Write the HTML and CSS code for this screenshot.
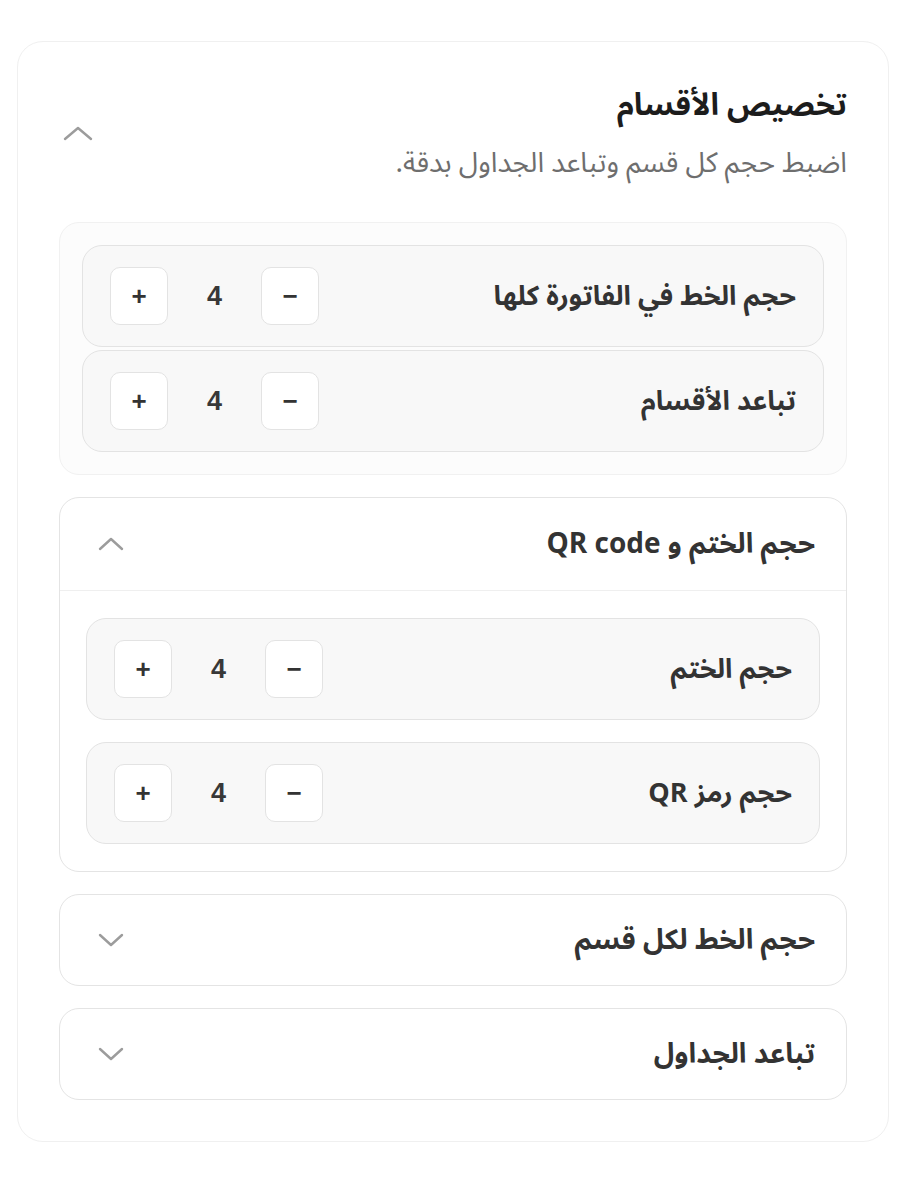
FILE: index.html
```html
<!DOCTYPE html>
<html lang="ar" dir="rtl">
<head>
  <meta charset="utf-8">
  <link rel="stylesheet" href="styles.css">
</head>
<body>
  <div class="card">
    <div class="card-head">
      <div class="head-text">
        <h2 class="title">تخصيص الأقسام</h2>
        <p class="subtitle">اضبط حجم كل قسم وتباعد الجداول بدقة.</p>
      </div>
      <svg class="chev chev-lg" viewBox="0 0 30 16"><polyline points="2,14 15,3 28,14"/></svg>
    </div>

    <div class="group-soft">
      <div class="row">
        <span class="row-label">حجم الخط في الفاتورة كلها</span>
        <div class="stepper">
          <button class="step-btn">&minus;</button>
          <span class="step-val">4</span>
          <button class="step-btn">+</button>
        </div>
      </div>
      <div class="row">
        <span class="row-label">تباعد الأقسام</span>
        <div class="stepper">
          <button class="step-btn">&minus;</button>
          <span class="step-val">4</span>
          <button class="step-btn">+</button>
        </div>
      </div>
    </div>

    <div class="group open">
      <div class="group-head">
        <span class="group-title">حجم الختم و QR code</span>
        <svg class="chev" viewBox="0 0 26 14"><polyline points="2,12 13,2 24,12"/></svg>
      </div>
      <div class="group-body">
        <div class="row">
          <span class="row-label">حجم الختم</span>
          <div class="stepper">
            <button class="step-btn">&minus;</button>
            <span class="step-val">4</span>
            <button class="step-btn">+</button>
          </div>
        </div>
        <div class="row">
          <span class="row-label">حجم رمز QR</span>
          <div class="stepper">
            <button class="step-btn">&minus;</button>
            <span class="step-val">4</span>
            <button class="step-btn">+</button>
          </div>
        </div>
      </div>
    </div>

    <div class="group">
      <div class="group-head">
        <span class="group-title">حجم الخط لكل قسم</span>
        <svg class="chev" viewBox="0 0 26 14"><polyline points="2,2 13,12 24,2"/></svg>
      </div>
    </div>

    <div class="group">
      <div class="group-head">
        <span class="group-title">تباعد الجداول</span>
        <svg class="chev" viewBox="0 0 26 14"><polyline points="2,2 13,12 24,2"/></svg>
      </div>
    </div>
  </div>
</body>
</html>
```

FILE: styles.css
```css
/* settings panel */
body {
  margin: 0;
  background-color: #fff;
  font-family: "Noto Sans Arabic", "DejaVu Sans", "Noto Sans", sans-serif;
  color: #333;
}

.card {
  width: 872px;
  box-sizing: border-box;
  margin: 41px 11px 0 17px;
  padding: 32px 41px 41px;
  border: 1px solid #f0f0f0;
  border-radius: 26px;
  background-color: #fff;
  display: flex;
  flex-direction: column;
  gap: 22px;
}

.card-head {
  display: flex;
  justify-content: space-between;
  align-items: center;
  margin-bottom: 8px;
}

.title {
  margin: 0;
  font-size: 31px;
  line-height: 62px;
  font-weight: 700;
  color: #1c1c1c;
}

.subtitle {
  margin: 0;
  font-size: 28px;
  line-height: 56px;
  color: #6e6e6e;
}

.chev {
  width: 26px;
  height: 14px;
  fill: none;
  stroke: #9c9c9c;
  stroke-width: 2.4;
  stroke-linecap: round;
  stroke-linejoin: round;
}

.chev-lg {
  width: 30px;
  height: 16px;
  margin-left: 4px;
}

.group-soft {
  padding: 22px;
  border: 1px solid #f1f1f1;
  border-radius: 20px;
  background-color: #fcfcfc;
  display: flex;
  flex-direction: column;
  gap: 3px;
}

.row {
  height: 102px;
  box-sizing: border-box;
  padding: 0 27px;
  border: 1px solid #e3e3e3;
  border-radius: 20px;
  background-color: #f8f8f8;
  display: flex;
  justify-content: space-between;
  align-items: center;
}

.row-label {
  font-size: 27px;
  font-weight: 700;
  color: #333;
}

.stepper {
  display: flex;
  align-items: center;
  gap: 24px;
}

.step-btn {
  width: 58px;
  height: 58px;
  padding: 0;
  border: 1px solid #e3e3e3;
  border-radius: 10px;
  background-color: #fff;
  font-family: "Liberation Sans", Arial, sans-serif;
  font-size: 26px;
  font-weight: 700;
  color: #333;
}

.step-val {
  width: 45px;
  text-align: center;
  font-family: "Liberation Sans", Arial, sans-serif;
  font-size: 27px;
  font-weight: 700;
  color: #383838;
}

.group {
  border: 1px solid #e4e4e4;
  border-radius: 20px;
  background-color: #fff;
}

.group-head {
  height: 90px;
  padding: 0 31px 0 38px;
  display: flex;
  justify-content: space-between;
  align-items: center;
}

.group.open .group-head {
  height: 92px;
  border-bottom: 1px solid #efefef;
}

.group-title {
  font-size: 28px;
  font-weight: 700;
  color: #333;
}

.group-body {
  padding: 27px 26px 27px;
  display: flex;
  flex-direction: column;
  gap: 22px;
}
```
